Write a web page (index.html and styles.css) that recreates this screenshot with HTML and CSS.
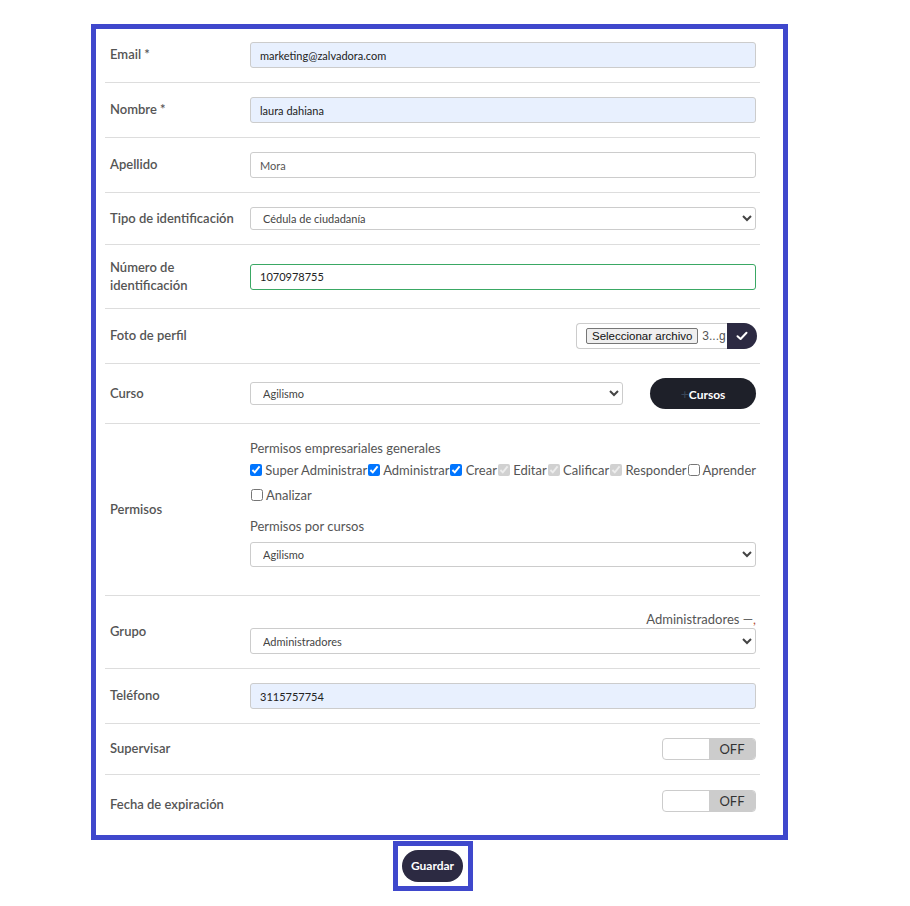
FILE: index.html
```html
<!DOCTYPE html>
<html lang="es">
<head>
    <meta charset="UTF-8">
    <meta name="viewport" content="width=device-width, initial-scale=1.0">
    <title>Editar usuario</title>
    <link rel="stylesheet" href="styles.css">
</head>
<body>

    <!-- User form -->
    <div class="frame">
        <form class="user-form">
            <div class="row first">
                <label class="field-label">Email *</label>
                <div class="field"><input class="text-input autofill" type="text" value="marketing@zalvadora.com"></div>
            </div>
            <div class="row">
                <label class="field-label">Nombre *</label>
                <div class="field"><input class="text-input autofill" type="text" value="laura dahiana"></div>
            </div>
            <div class="row">
                <label class="field-label">Apellido</label>
                <div class="field"><input class="text-input soft" type="text" value="Mora"></div>
            </div>
            <div class="row">
                <label class="field-label">Tipo de identificación</label>
                <div class="field">
                    <select class="select-input">
                        <option>Cédula de ciudadanía</option>
                    </select>
                </div>
            </div>
            <div class="row">
                <label class="field-label">Número de<br>identificación</label>
                <div class="field"><input class="text-input valid" type="text" value="1070978755"></div>
            </div>
            <div class="row">
                <label class="field-label">Foto de perfil</label>
                <div class="field right">
                    <div class="file-group">
                        <span class="file-btn">Seleccionar archivo</span>
                        <span class="file-name">3...g</span>
                        <span class="file-ok">
                            <svg width="12" height="10" viewBox="0 0 12 10"><path d="M1.5 5.2 L4.6 8 L10.5 1.8" fill="none" stroke="#fff" stroke-width="2" stroke-linecap="round" stroke-linejoin="round"/></svg>
                        </span>
                    </div>
                </div>
            </div>
            <div class="row">
                <label class="field-label">Curso</label>
                <div class="field course">
                    <select class="select-input">
                        <option>Agilismo</option>
                    </select>
                    <button type="button" class="add-course"><span class="plus">+</span>Cursos</button>
                </div>
            </div>
            <div class="row">
                <label class="field-label">Permisos</label>
                <div class="field stack">
                    <p class="sub-title">Permisos empresariales generales</p>
                    <div class="checks">
                        <label class="check"><input type="checkbox" checked> Super Administrar</label><label class="check"><input type="checkbox" checked> Administrar</label><label class="check"><input type="checkbox" checked> Crear</label><label class="check"><input type="checkbox" checked disabled> Editar</label><label class="check"><input type="checkbox" checked disabled> Calificar</label><label class="check"><input type="checkbox" checked disabled> Responder</label><label class="check"><input type="checkbox"> Aprender</label><label class="check"><input type="checkbox"> Analizar</label>
                    </div>
                    <p class="sub-title spaced">Permisos por cursos</p>
                    <select class="select-input last">
                        <option>Agilismo</option>
                    </select>
                </div>
            </div>
            <div class="row">
                <label class="field-label">Grupo</label>
                <div class="field stack">
                    <p class="group-tag">Administradores <span class="dash">—</span><span class="comma">,</span></p>
                    <select class="select-input tall">
                        <option>Administradores</option>
                    </select>
                </div>
            </div>
            <div class="row">
                <label class="field-label">Teléfono</label>
                <div class="field"><input class="text-input autofill" type="text" value="3115757754"></div>
            </div>
            <div class="row">
                <label class="field-label">Supervisar</label>
                <div class="field right">
                    <div class="toggle"><span class="toggle-off">OFF</span></div>
                </div>
            </div>
            <div class="row last-row">
                <label class="field-label">Fecha de expiración</label>
                <div class="field right">
                    <div class="toggle"><span class="toggle-off">OFF</span></div>
                </div>
            </div>
        </form>
    </div>

    <!-- Save button -->
    <div class="actions">
        <div class="save-box">
            <button type="button" class="save">Guardar</button>
        </div>
    </div>

</body>
</html>
```

FILE: styles.css
```css
body {
    margin: 0;
    font-family: 'Lato', 'Open Sans', sans-serif;
    background-color: #fff;
    color: #555;
}

/* Blue highlight frame round the form */
.frame {
    box-sizing: border-box;
    width: 697px;
    margin: 24px 0 0 91px;
    border: 5px solid #3f48cc;
    padding: 0 23px 0 9px;
}

.user-form {
    margin: 0;
}

/* One form row: label on the left, control on the right */
.row {
    display: grid;
    grid-template-columns: 140px 1fr;
    align-items: center;
    padding: 14px 4px 14px 5px;
    border-bottom: 1px solid #ddd;
}

.row.first {
    padding-top: 13px;
}

.row.last-row {
    border-bottom: none;
    padding-bottom: 21px;
}

.row.last-row .field-label {
    padding-top: 7px;
}

.field-label {
    font-size: 13px;
    font-weight: 600;
    line-height: 17.5px;
    color: #555;
}

.field {
    display: flex;
    align-items: center;
}

.field.right {
    justify-content: flex-end;
}

.field.stack {
    flex-direction: column;
    align-items: stretch;
}

/* Inputs */
.text-input {
    box-sizing: border-box;
    width: 100%;
    height: 26px;
    padding: 0 9px;
    border: 1px solid #ccc;
    border-radius: 3px;
    font-family: 'Lato', sans-serif;
    font-size: 11px;
    color: #222;
    background-color: #fff;
}

.text-input.autofill {
    background-color: #e8f0fe;
}

.text-input.soft {
    color: #555;
}

.text-input.valid {
    border-color: #3aa864;
}

.select-input {
    box-sizing: border-box;
    width: 100%;
    height: 23px;
    padding: 0 8px;
    border: 1px solid #ccc;
    border-radius: 3px;
    font-family: 'Lato', sans-serif;
    font-size: 11px;
    color: #444;
    background-color: #fff;
}

.select-input.last {
    height: 25px;
    margin-bottom: 14px;
}

.select-input.tall {
    height: 26px;
}

/* File picker */
.file-group {
    display: flex;
    align-items: center;
    width: 180px;
    height: 26px;
    box-sizing: border-box;
    border: 1px solid #ccc;
    border-right: none;
    border-radius: 4px 13px 13px 4px;
    padding-left: 9px;
}

.file-btn {
    flex-shrink: 0;
    white-space: nowrap;
    font-family: 'Liberation Sans', Arial, sans-serif;
    font-size: 11.5px;
    line-height: 14px;
    color: #111;
    background-color: #efefef;
    border: 1px solid #767676;
    border-radius: 2px;
    padding: 0 5px;
}

.file-name {
    flex: 1;
    white-space: nowrap;
    overflow: hidden;
    font-family: 'Liberation Sans', Arial, sans-serif;
    font-size: 12px;
    color: #555;
    margin-left: 4px;
}

.file-ok {
    flex-shrink: 0;
    display: flex;
    align-items: center;
    justify-content: center;
    width: 30px;
    height: 26px;
    margin-right: -1px;
    background-color: #2c2a42;
    border-radius: 0 13px 13px 0;
}

/* Course row */
.course .select-input {
    flex: 1;
}

.add-course {
    width: 106px;
    height: 31px;
    margin-left: 27px;
    border: none;
    border-radius: 16px;
    background-color: #1e2029;
    color: #fff;
    font-family: 'Lato', sans-serif;
    font-size: 12px;
    font-weight: 700;
    cursor: pointer;
}

.plus {
    color: #3a4658;
    font-weight: 400;
    font-size: 14px;
}

/* Permissions */
.sub-title {
    margin: 0;
    font-size: 13px;
    line-height: 20px;
    color: #555;
}

.sub-title.spaced {
    margin-top: 8px;
    margin-bottom: 6px;
}

.checks {
    font-size: 13px;
    line-height: 25px;
    color: #555;
}

.check input {
    width: 12px;
    height: 12px;
    margin: 0 0 0 1px;
    vertical-align: -1px;
    accent-color: #0075ff;
}

.check:first-child input {
    margin-left: 0;
}

.group-tag {
    margin: 0;
    text-align: right;
    font-size: 13px;
    line-height: 18px;
    color: #555;
}

.dash {
    color: #666;
}

.comma {
    color: #b4533a;
}

/* OFF toggles */
.toggle {
    display: flex;
    justify-content: flex-end;
    width: 94px;
    height: 22px;
    box-sizing: border-box;
    border: 1px solid #ccc;
    border-radius: 4px;
    overflow: hidden;
    background-color: #fff;
}

.toggle-off {
    width: 46px;
    background-color: #ccc;
    text-align: center;
    font-size: 13px;
    line-height: 20px;
    color: #333;
}

/* Save */
.actions {
    display: flex;
    padding: 1px 0 0 393px;
}

.save-box {
    border: 5px solid #3f48cc;
    padding: 4px 5px 4px 4px;
}

.save {
    display: block;
    width: 61px;
    height: 32px;
    border: none;
    border-radius: 16px;
    background-color: #2c2a42;
    color: #fff;
    font-family: 'Lato', sans-serif;
    font-size: 12px;
    font-weight: 700;
    cursor: pointer;
}
```
